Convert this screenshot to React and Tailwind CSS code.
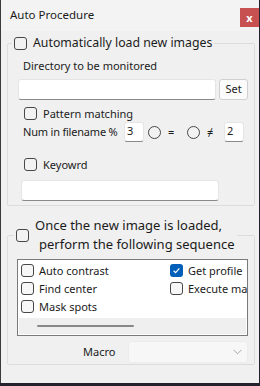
function Check({ checked = false, white = false }) {
  if (checked) {
    return (
      <span className="flex h-[13px] w-[13px] shrink-0 items-center justify-center rounded-[3px] bg-[#005fb8]">
        <svg width="9" height="9" viewBox="0 0 9 9">
          <path d="M1.6 4.7 L3.6 6.6 L7.4 2.4" stroke="white" strokeWidth="1.2" fill="none" />
        </svg>
      </span>
    );
  }
  return (
    <span
      className={`h-[13px] w-[13px] shrink-0 rounded-[3px] border border-[#474747] ${
        white ? "bg-[#f7f7f7]" : "bg-[#f2f2f2]"
      }`}
    />
  );
}

function Radio({ className = "" }) {
  return (
    <span className={`h-[13px] w-[13px] shrink-0 rounded-full border border-[#474747] bg-[#f2f2f2] ${className}`} />
  );
}

function TextBox({ className = "", value = "" }) {
  return (
    <div
      className={`shrink-0 rounded-[3px] border border-[#e5e5e5] border-b-[#8a8a8a] bg-white px-[2px] text-[11px] leading-[16px] ${className}`}
    >
      {value}
    </div>
  );
}

export default function App() {
  const items = [
    ["Auto contrast", false, "Get profile", true],
    ["Find center", false, "Execute macro", false],
    ["Mask spots", false, null, false],
  ];

  return (
    <div className="h-[386px] w-[260px] overflow-hidden bg-[#23212e] font-['Noto_Sans',sans-serif] text-[#1b1b1b]">
      <div className="flex h-[383px] w-[259px] flex-col border-l border-[#3a3a3a] bg-[#f0f0f0]">
        {/* title bar */}
        <div className="flex h-[31px] shrink-0 items-start justify-between bg-[#f3f3f3]">
          <span className="ml-[9px] mt-[7px] text-[11.5px] leading-[16px]">Auto Procedure</span>
          <span className="mt-[8px] flex h-[19px] w-[19px] items-center justify-center bg-[#c75050] text-[11px] font-bold leading-none text-white">
            x
          </span>
        </div>

        {/* group 1 */}
        <fieldset className="ml-[6px] mt-[3px] w-[248px] rounded-[2px] border border-[#dcdcdc]">
          <legend className="ml-[4px] flex items-center gap-[6px] whitespace-nowrap px-[2px] text-[12.3px] leading-[18px]">
            <Check />
            <span>Automatically load new images</span>
          </legend>
          <div className="flex flex-col items-start pb-[4px] pl-[10px] pr-[5px]">
            <div className="ml-[5px] mt-[5px] text-[11px] leading-[17px]">Directory to be monitored</div>
            <div className="mt-[5px] flex gap-[3px]">
              <TextBox className="h-[21px] w-[198px]" />
              <div className="flex h-[21px] w-[29px] items-center justify-center rounded-[3px] border border-[#d0d0d0] bg-[#fbfbfb] text-[11px]">
                Set
              </div>
            </div>
            <div className="ml-[6px] mt-[6px] flex items-center gap-[6px] text-[11px] leading-[15px]">
              <Check />
              <span>Pattern matching</span>
            </div>
            <div className="ml-[5px] mt-[1px] flex h-[20px] items-center whitespace-nowrap text-[11px]">
              <span className="w-[101px] tracking-[-0.2px]">Num in filename %</span>
              <TextBox className="h-[20px] w-[20px]" value="3" />
              <Radio className="ml-[4px]" />
              <span className="ml-[7px] w-[19px]">=</span>
              <Radio />
              <span className="ml-[7px] w-[17px]">≠</span>
              <TextBox className="h-[20px] w-[20px]" value="2" />
            </div>
            <div className="ml-[6px] mt-[15px] flex items-center gap-[6px] text-[11px] leading-[15px]">
              <Check />
              <span>Keyowrd</span>
            </div>
            <div className="mt-[8px] grid w-[230px] grid-cols-[3px_198px_1fr]">
              <span />
              <TextBox className="h-[21px]" />
              <span />
            </div>
          </div>
        </fieldset>

        {/* group 2 */}
        <fieldset className="ml-[6px] mt-[10px] w-[248px] rounded-[2px] border border-[#dcdcdc]">
          <legend className="ml-[6px] flex items-center gap-[6px] whitespace-nowrap px-[2px] text-[13px] leading-[19px]">
            <Check />
            <span className="flex flex-col">
              <span>Once the new image is loaded,</span>
              <span className="ml-[4px]">perform the following sequence</span>
            </span>
          </legend>
          <div className="pb-[1px] pl-[9px] pr-[6px]">
            <div className="mt-[5px] flex h-[77px] w-[231px] flex-col overflow-hidden border border-[#7a7a7a] bg-white">
              <div className="flex flex-1 flex-col gap-[5px] pl-[3px] pt-[4px]">
                {items.map(([a, ac, b, bc]) => (
                  <div key={a} className="flex h-[13px] items-center whitespace-nowrap text-[11px] leading-[15px]">
                    <span className="flex w-[149px] shrink-0 items-center gap-[5px]">
                      <Check checked={ac} white />
                      <span>{a}</span>
                    </span>
                    {b && (
                      <span className="flex shrink-0 items-center gap-[5px]">
                        <Check checked={bc} white />
                        <span>{b}</span>
                      </span>
                    )}
                  </div>
                ))}
              </div>
              <div className="mx-[1px] mb-[1px] flex h-[16px] shrink-0 items-center bg-[#efefef] pl-[18px]">
                <div className="h-[2px] w-[97px] rounded-full bg-[#888888]" />
              </div>
            </div>
            <div className="mt-[5px] flex items-center">
              <span className="ml-[66px] w-[45px] text-[11px]">Macro</span>
              <div className="flex h-[22px] w-[120px] items-center justify-end rounded-[3px] border border-[#ececec] bg-[#f7f7f7] pr-[5px]">
                <svg width="9" height="6" viewBox="0 0 9 6">
                  <path d="M0.5 0.8 L4.5 4.8 L8.5 0.8" stroke="#a8a8a8" strokeWidth="1" fill="none" />
                </svg>
              </div>
            </div>
          </div>
        </fieldset>
      </div>
    </div>
  );
}
